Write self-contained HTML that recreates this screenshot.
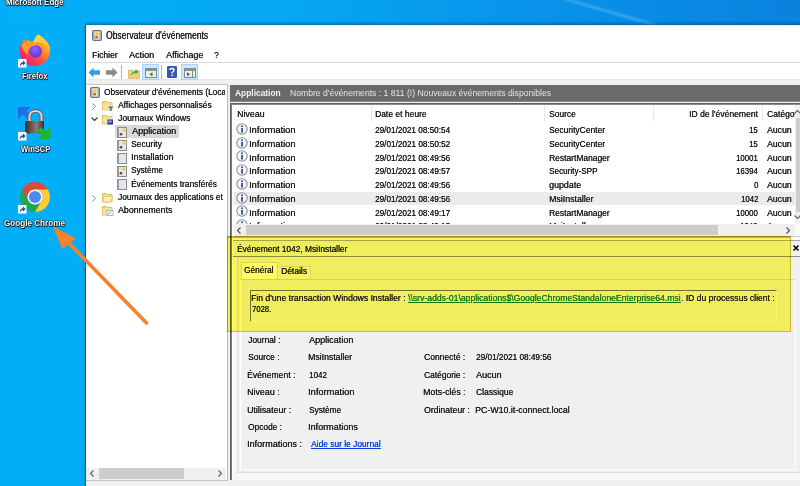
<!DOCTYPE html>
<html><head><meta charset="utf-8">
<style>
*{margin:0;padding:0;box-sizing:border-box}
html,body{width:800px;height:486px;overflow:hidden}
body{background:#03aef8;font-family:"Liberation Sans",sans-serif;font-size:9px;color:#1a1a1a;position:relative}
.a{position:absolute;white-space:nowrap}
svg.a{overflow:visible}
.dl{color:#fff}
</style></head><body>
<div class="a" style="left:0px;top:0px;width:800px;height:25px;background:linear-gradient(to right,#03aef8 0%,#05a8f4 35%,#0894ea 65%,#0a82de 100%);"></div>
<svg class="a" style="left:0;top:0" width="800" height="25"><defs><filter id="bl"><feGaussianBlur stdDeviation="1"/></filter></defs><path d="M565 -1 L655 25" stroke="rgba(140,205,255,0.4)" stroke-width="2.5" filter="url(#bl)"/></svg>
<div class="a" style="left:85px;top:20px;width:715px;height:5px;background:linear-gradient(rgba(0,40,80,0),rgba(0,40,80,0.12) 50%,rgba(0,40,80,0.4));"></div>
<div class="a" style="left:81px;top:25px;width:4px;height:461px;background:linear-gradient(to right,rgba(0,60,120,0),rgba(0,60,120,0.14));"></div>
<div class="a" style="left:85px;top:25px;width:715px;height:461px;background:#f0f0f0;"></div>
<div class="a" style="left:86px;top:26px;width:714px;height:54px;background:#fff;"></div>
<div class="a" style="left:85px;top:25px;width:1px;height:461px;background:#1d5480;"></div>
<div class="a" style="left:86px;top:62px;width:714px;height:1px;background:#dadada;"></div>
<div class="a" style="left:86px;top:79px;width:714px;height:1px;background:#e6e6e6;"></div>
<svg class="a" style="left:92px;top:30px" width="10" height="11" viewBox="0 0 10 11"><rect x="0.5" y="0.5" width="9" height="10" rx="1" fill="#a3aacb" stroke="#6b6f86" stroke-width="1"/><rect x="2.5" y="1.5" width="5" height="8" fill="#f4e6a8"/><circle cx="5" cy="3.8" r="1.4" fill="#e8c040"/><circle cx="4.6" cy="7.2" r="1.4" fill="#c8584a"/></svg>
<div class="a" style="left:105.62px;top:29.89px;font-size:10px;line-height:12.5px;transform:scaleX(0.8525);transform-origin:0 0;text-shadow:0.2px 0 0;">Observateur d'événements</div>
<div class="a" style="left:91.92px;top:48.77px;font-size:9.5px;line-height:11.88px;transform:scaleX(0.8971);transform-origin:0 0;text-shadow:0.2px 0 0;">Fichier</div>
<div class="a" style="left:129.40px;top:48.77px;font-size:9.5px;line-height:11.88px;transform:scaleX(0.9520);transform-origin:0 0;text-shadow:0.2px 0 0;">Action</div>
<div class="a" style="left:166.00px;top:48.77px;font-size:9.5px;line-height:11.88px;transform:scaleX(0.9476);transform-origin:0 0;text-shadow:0.2px 0 0;">Affichage</div>
<div class="a" style="left:213.67px;top:48.77px;font-size:9.5px;line-height:11.88px;transform:scaleX(0.8772);transform-origin:0 0;text-shadow:0.2px 0 0;">?</div>
<svg class="a" style="left:88px;top:66.5px" width="13" height="11" viewBox="0 0 13 11"><path d="M0.5 5.5 L5.5 0.5 V3.3 H12 V7.7 H5.5 V10.5 Z" fill="#3a9ce8"/></svg>
<svg class="a" style="left:104.5px;top:66.5px" width="13" height="11" viewBox="0 0 13 11"><path d="M12.5 5.5 L7.5 0.5 V3.3 H1 V7.7 H7.5 V10.5 Z" fill="#8a8a8a"/></svg>
<div class="a" style="left:121px;top:65px;width:1px;height:14px;background:#b4b4b4;"></div>
<svg class="a" style="left:127.5px;top:66.5px" width="12" height="12" viewBox="0 0 12 12"><path d="M0.5 3 H4.5 L5.5 4 H11.5 V11.5 H0.5 Z" fill="#f0cf7a" stroke="#c9a650" stroke-width="0.6"/><path d="M2.5 9 C3.5 6 5 4.5 7.5 4 V2 L10.5 4.8 L7.5 7.5 V5.8 C6 6 4 7 2.5 9Z" fill="#3fae3a"/></svg>
<div class="a" style="left:142px;top:63.8px;width:16.8px;height:16px;background:#cfe7fb;border:1px solid #a9d4f7;"></div>
<svg class="a" style="left:144.5px;top:67.5px" width="12" height="10" viewBox="0 0 12 10"><rect x="0.5" y="0.5" width="11" height="9" fill="#e8efe4" stroke="#808a90" stroke-width="1"/><rect x="0.5" y="0.5" width="11" height="2.5" fill="#8a9096"/><path d="M7.5 4.2 L4.5 6.2 L7.5 8.2 Z" fill="#3a6a3a"/></svg>
<div class="a" style="left:160.5px;top:65px;width:1px;height:14px;background:#b4b4b4;"></div>
<svg class="a" style="left:167px;top:66px" width="10" height="12" viewBox="0 0 10 12"><rect x="0" y="0" width="10" height="12" rx="1" fill="#3a57b8"/><path d="M3 4 C3 2 7 2 7 4 C7 5.5 5 5.5 5 7.5" fill="none" stroke="#fff" stroke-width="1.4"/><rect x="4.3" y="8.6" width="1.5" height="1.5" fill="#fff"/></svg>
<div class="a" style="left:181.3px;top:63.8px;width:16.5px;height:16px;background:#cfe7fb;border:1px solid #a9d4f7;"></div>
<svg class="a" style="left:183.5px;top:67.5px" width="12" height="10" viewBox="0 0 12 10"><rect x="0.5" y="0.5" width="11" height="9" fill="#e8efe4" stroke="#808a90" stroke-width="1"/><rect x="0.5" y="0.5" width="11" height="2.5" fill="#8a9096"/><rect x="8" y="3" width="1" height="6.5" fill="#808a90"/><path d="M3 4.2 L6 6.2 L3 8.2 Z" fill="#3a6a3a"/></svg>
<div class="a" style="left:86px;top:84px;width:141.5px;height:397px;background:#fff;border-top:1px solid #c4c4c4;border-right:1px solid #b9b9b9;border-bottom:1px solid #c4c4c4;"></div>
<div class="a" style="left:0;top:0;width:224.5px;height:486px;overflow:hidden">
<div class="a" style="left:114.5px;top:125.2px;width:64px;height:12.5px;background:#d9d9d9;"></div>
<svg class="a" style="left:89.5px;top:87.3px" width="10" height="11" viewBox="0 0 10 11"><rect x="0.5" y="0.5" width="9" height="10" rx="1" fill="#a3aacb" stroke="#6b6f86" stroke-width="1"/><rect x="2.5" y="1.5" width="5" height="8" fill="#f4e6a8"/><circle cx="5" cy="3.8" r="1.4" fill="#e8c040"/><circle cx="4.6" cy="7.2" r="1.4" fill="#c8584a"/></svg>
<div class="a" style="left:103.63px;top:86.17px;font-size:9.5px;line-height:11.88px;transform:scaleX(0.8700);transform-origin:0 0;text-shadow:0.2px 0 0;">Observateur d'événements (Local)</div>
<svg class="a" style="left:91px;top:103.4px" width="7" height="7" viewBox="0 0 7 7"><path d="M1.5 0.5l3 3-3 3" fill="none" stroke="#8a8a8a" stroke-width="1.0"/></svg>
<svg class="a" style="left:102px;top:100.4px" width="12" height="11" viewBox="0 0 12 11"><path d="M0.5 1.5h4l1 1h4.5v7.5h-9.5z" fill="#f2d779" stroke="#d9b64a" stroke-width="0.8"/><rect x="0.8" y="3.2" width="9" height="6.5" fill="#f7e49a"/><path d="M6 6.5h5.5l-2 2.2v2.3h-1.4v-2.3z" fill="#4f6f95"/></svg>
<div class="a" style="left:117.70px;top:99.22px;font-size:9.5px;line-height:11.88px;transform:scaleX(0.8876);transform-origin:0 0;text-shadow:0.2px 0 0;">Affichages personnalisés</div>
<svg class="a" style="left:90.5px;top:116.0px" width="7" height="7" viewBox="0 0 7 7"><path d="M0.5 1.5l3 3 3-3" fill="none" stroke="#333" stroke-width="1.1"/></svg>
<svg class="a" style="left:102px;top:113.5px" width="12" height="11" viewBox="0 0 12 11"><path d="M0.5 1.5h4l1 1h4.5v7.5h-9.5z" fill="#f2d779" stroke="#d9b64a" stroke-width="0.8"/><rect x="0.8" y="3.2" width="9" height="6.5" fill="#f7e49a"/><rect x="5.5" y="5.5" width="5.5" height="5" fill="#1f3fa6"/><rect x="6.5" y="6.5" width="3" height="2" fill="#9ab0e8"/></svg>
<div class="a" style="left:117.57px;top:112.27px;font-size:9.5px;line-height:11.88px;transform:scaleX(0.9010);transform-origin:0 0;text-shadow:0.2px 0 0;">Journaux Windows</div>
<svg class="a" style="left:117px;top:126.6px" width="10" height="11" viewBox="0 0 10 11"><rect x="0.5" y="0.5" width="9" height="10" fill="#dfe8f2" stroke="#8b8b8b" stroke-width="1"/><rect x="0.5" y="0.5" width="1.5" height="10" fill="#9c9c9c"/><circle cx="6.8" cy="3" r="1.7" fill="#f0d040"/><circle cx="4" cy="7.3" r="1.3" fill="#8a3020"/></svg>
<div class="a" style="left:131.50px;top:125.32px;font-size:9.5px;line-height:11.88px;transform:scaleX(0.9480);transform-origin:0 0;text-shadow:0.2px 0 0;">Application</div>
<svg class="a" style="left:117px;top:139.7px" width="10" height="11" viewBox="0 0 10 11"><rect x="0.5" y="0.5" width="9" height="10" fill="#dfe8f2" stroke="#8b8b8b" stroke-width="1"/><rect x="0.5" y="0.5" width="1.5" height="10" fill="#9c9c9c"/><circle cx="6.8" cy="3" r="1.7" fill="#f0d040"/><circle cx="4" cy="7.3" r="1.3" fill="#8a3020"/></svg>
<div class="a" style="left:131.12px;top:138.37px;font-size:9.5px;line-height:11.88px;transform:scaleX(0.8947);transform-origin:0 0;text-shadow:0.2px 0 0;">Security</div>
<svg class="a" style="left:117px;top:152.8px" width="10" height="11" viewBox="0 0 10 11"><rect x="0.5" y="0.5" width="9" height="10" fill="#dfe8f2" stroke="#8b8b8b" stroke-width="1"/><rect x="0.5" y="0.5" width="1.5" height="10" fill="#9c9c9c"/></svg>
<div class="a" style="left:130.70px;top:151.42px;font-size:9.5px;line-height:11.88px;transform:scaleX(0.9344);transform-origin:0 0;text-shadow:0.2px 0 0;">Installation</div>
<svg class="a" style="left:117px;top:165.9px" width="10" height="11" viewBox="0 0 10 11"><rect x="0.5" y="0.5" width="9" height="10" fill="#dfe8f2" stroke="#8b8b8b" stroke-width="1"/><rect x="0.5" y="0.5" width="1.5" height="10" fill="#9c9c9c"/><circle cx="6.8" cy="3" r="1.7" fill="#f0d040"/><circle cx="4" cy="7.3" r="1.3" fill="#8a3020"/></svg>
<div class="a" style="left:131.13px;top:164.47px;font-size:9.5px;line-height:11.88px;transform:scaleX(0.8631);transform-origin:0 0;text-shadow:0.2px 0 0;">Système</div>
<svg class="a" style="left:117px;top:179.0px" width="10" height="11" viewBox="0 0 10 11"><rect x="0.5" y="0.5" width="9" height="10" fill="#dfe8f2" stroke="#8b8b8b" stroke-width="1"/><rect x="0.5" y="0.5" width="1.5" height="10" fill="#9c9c9c"/></svg>
<div class="a" style="left:130.83px;top:177.52px;font-size:9.5px;line-height:11.88px;transform:scaleX(0.8787);transform-origin:0 0;text-shadow:0.2px 0 0;">Événements transférés</div>
<svg class="a" style="left:91px;top:195.1px" width="7" height="7" viewBox="0 0 7 7"><path d="M1.5 0.5l3 3-3 3" fill="none" stroke="#8a8a8a" stroke-width="1.0"/></svg>
<svg class="a" style="left:102px;top:192.1px" width="12" height="11" viewBox="0 0 12 11"><path d="M0.5 1.5h4l1 1h4.5v7.5h-9.5z" fill="#f2d779" stroke="#d9b64a" stroke-width="0.8"/><rect x="0.8" y="3.2" width="9" height="6.5" fill="#f7e49a"/><path d="M1.5 4.5h9l-1.5 5.5h-8z" fill="#fbeeb8" stroke="#d9b64a" stroke-width="0.6"/></svg>
<div class="a" style="left:117.58px;top:190.57px;font-size:9.5px;line-height:11.88px;transform:scaleX(0.8700);transform-origin:0 0;text-shadow:0.2px 0 0;">Journaux des applications et services</div>
<svg class="a" style="left:102px;top:205.2px" width="12" height="11" viewBox="0 0 12 11"><path d="M0.5 1.5h4l1 1h4.5v7.5h-9.5z" fill="#f2d779" stroke="#d9b64a" stroke-width="0.8"/><rect x="0.8" y="3.2" width="9" height="6.5" fill="#f7e49a"/><rect x="5" y="5.5" width="6" height="5" fill="#fff" stroke="#8aa0c8" stroke-width="0.7"/><path d="M6 9.5l3-3" stroke="#4070c0" stroke-width="0.8"/></svg>
<div class="a" style="left:117.70px;top:203.62px;font-size:9.5px;line-height:11.88px;transform:scaleX(0.9265);transform-origin:0 0;text-shadow:0.2px 0 0;">Abonnements</div>
</div>
<div class="a" style="left:86px;top:467.5px;width:140px;height:12.5px;background:#f0f0f0;"></div>
<div class="a" style="left:98.5px;top:468px;width:85px;height:10.5px;background:#cdcdcd;"></div>
<svg class="a" style="left:88.5px;top:470px" width="7" height="7" viewBox="0 0 7 7"><path d="M4.5 0.5l-3 3 3 3" fill="none" stroke="#606060" stroke-width="1.1"/></svg>
<svg class="a" style="left:217px;top:470px" width="7" height="7" viewBox="0 0 7 7"><path d="M1.5 0.5l3 3-3 3" fill="none" stroke="#606060" stroke-width="1.1"/></svg>
<div class="a" style="left:229.5px;top:85px;width:571px;height:15.5px;background:#6a6a6a;"></div>
<div class="a" style="left:234.79px;top:87.37px;font-size:9.5px;line-height:11.88px;transform:scaleX(0.8837);transform-origin:0 0;color:#f4f4f4;font-weight:bold;">Application</div>
<div class="a" style="left:290.31px;top:87.37px;font-size:9.5px;line-height:11.88px;transform:scaleX(0.9067);transform-origin:0 0;color:#e4e4e4;">Nombre d'événements : 1 811 (!) Nouveaux événements disponibles</div>
<div class="a" style="left:229.5px;top:101px;width:571px;height:1px;background:#8a8a8a;"></div>
<div class="a" style="left:229.6px;top:102.8px;width:571px;height:377.2px;background:#fff;border-left:1.6px solid #5e5e5e;border-top:1.4px solid #5e5e5e;"></div>
<div class="a" style="left:231.2px;top:104.2px;width:569px;height:375.8px;background:#fff;border-left:1.5px solid #7c7c7c;border-top:1.3px solid #8a8a8a;"></div>
<div class="a" style="left:233.5px;top:104.5px;width:561.5px;height:119.5px;overflow:hidden">
<div class="a" style="left:-233.5px;top:-104.5px;width:800px;height:486px">
<div class="a" style="left:370.5px;top:105px;width:1px;height:16px;background:#e6e6e6;"></div>
<div class="a" style="left:544px;top:105px;width:1px;height:16px;background:#e6e6e6;"></div>
<div class="a" style="left:653px;top:105px;width:1px;height:16px;background:#e6e6e6;"></div>
<div class="a" style="left:761.5px;top:105px;width:1px;height:16px;background:#e6e6e6;"></div>
<div class="a" style="left:237.29px;top:108.17px;font-size:9.5px;line-height:11.88px;transform:scaleX(0.9319);transform-origin:0 0;text-shadow:0.2px 0 0;">Niveau</div>
<div class="a" style="left:375.07px;top:108.17px;font-size:9.5px;line-height:11.88px;transform:scaleX(0.8949);transform-origin:0 0;text-shadow:0.2px 0 0;">Date et heure</div>
<div class="a" style="left:549.12px;top:108.17px;font-size:9.5px;line-height:11.88px;transform:scaleX(0.8886);transform-origin:0 0;text-shadow:0.2px 0 0;">Source</div>
<div class="a" style="left:688.73px;top:108.17px;font-size:9.5px;line-height:11.88px;transform:scaleX(0.9034);transform-origin:0 0;text-shadow:0.2px 0 0;">ID de l'événement</div>
<div class="a" style="left:766.67px;top:108.17px;font-size:9.5px;line-height:11.88px;transform:scaleX(0.9000);transform-origin:0 0;text-shadow:0.2px 0 0;">Catégorie</div>
<div class="a" style="left:233.5px;top:191.5px;width:561px;height:13.2px;background:#ebebeb;"></div>
<svg class="a" style="left:235.5px;top:122.85000000000001px" width="12" height="12" viewBox="0 0 12 12"><circle cx="6" cy="6" r="5.2" fill="#f4f7fc" stroke="#8d8d8d" stroke-width="1.1"/><circle cx="6" cy="3.3" r="1" fill="#2f4f9f"/><rect x="5.1" y="5" width="1.8" height="4.6" fill="#2f4f9f"/></svg>
<div class="a" style="left:248.66px;top:124.02px;font-size:9.5px;line-height:11.88px;transform:scaleX(0.9767);transform-origin:0 0;text-shadow:0.2px 0 0;">Information</div>
<div class="a" style="left:375.19px;top:124.02px;font-size:9.5px;line-height:11.88px;transform:scaleX(0.8606);transform-origin:0 0;text-shadow:0.2px 0 0;">29/01/2021 08:50:54</div>
<div class="a" style="left:549.12px;top:124.02px;font-size:9.5px;line-height:11.88px;transform:scaleX(0.8912);transform-origin:0 0;text-shadow:0.2px 0 0;">SecurityCenter</div>
<div class="a" style="left:749.23px;top:124.02px;font-size:9.5px;line-height:11.88px;transform:scaleX(0.8231);transform-origin:0 0;text-shadow:0.2px 0 0;">15</div>
<div class="a" style="left:767.10px;top:124.02px;font-size:9.5px;line-height:11.88px;transform:scaleX(0.9142);transform-origin:0 0;text-shadow:0.2px 0 0;">Aucun</div>
<svg class="a" style="left:235.5px;top:136.62px" width="12" height="12" viewBox="0 0 12 12"><circle cx="6" cy="6" r="5.2" fill="#f4f7fc" stroke="#8d8d8d" stroke-width="1.1"/><circle cx="6" cy="3.3" r="1" fill="#2f4f9f"/><rect x="5.1" y="5" width="1.8" height="4.6" fill="#2f4f9f"/></svg>
<div class="a" style="left:248.66px;top:137.79px;font-size:9.5px;line-height:11.88px;transform:scaleX(0.9767);transform-origin:0 0;text-shadow:0.2px 0 0;">Information</div>
<div class="a" style="left:375.19px;top:137.79px;font-size:9.5px;line-height:11.88px;transform:scaleX(0.8625);transform-origin:0 0;text-shadow:0.2px 0 0;">29/01/2021 08:50:52</div>
<div class="a" style="left:549.12px;top:137.79px;font-size:9.5px;line-height:11.88px;transform:scaleX(0.8912);transform-origin:0 0;text-shadow:0.2px 0 0;">SecurityCenter</div>
<div class="a" style="left:749.23px;top:137.79px;font-size:9.5px;line-height:11.88px;transform:scaleX(0.8231);transform-origin:0 0;text-shadow:0.2px 0 0;">15</div>
<div class="a" style="left:767.10px;top:137.79px;font-size:9.5px;line-height:11.88px;transform:scaleX(0.9142);transform-origin:0 0;text-shadow:0.2px 0 0;">Aucun</div>
<svg class="a" style="left:235.5px;top:150.39px" width="12" height="12" viewBox="0 0 12 12"><circle cx="6" cy="6" r="5.2" fill="#f4f7fc" stroke="#8d8d8d" stroke-width="1.1"/><circle cx="6" cy="3.3" r="1" fill="#2f4f9f"/><rect x="5.1" y="5" width="1.8" height="4.6" fill="#2f4f9f"/></svg>
<div class="a" style="left:248.66px;top:151.56px;font-size:9.5px;line-height:11.88px;transform:scaleX(0.9767);transform-origin:0 0;text-shadow:0.2px 0 0;">Information</div>
<div class="a" style="left:375.19px;top:151.56px;font-size:9.5px;line-height:11.88px;transform:scaleX(0.8620);transform-origin:0 0;text-shadow:0.2px 0 0;">29/01/2021 08:49:56</div>
<div class="a" style="left:548.82px;top:151.56px;font-size:9.5px;line-height:11.88px;transform:scaleX(0.8897);transform-origin:0 0;text-shadow:0.2px 0 0;">RestartManager</div>
<div class="a" style="left:736.21px;top:151.56px;font-size:9.5px;line-height:11.88px;transform:scaleX(0.8231);transform-origin:0 0;text-shadow:0.2px 0 0;">10001</div>
<div class="a" style="left:767.10px;top:151.56px;font-size:9.5px;line-height:11.88px;transform:scaleX(0.9142);transform-origin:0 0;text-shadow:0.2px 0 0;">Aucun</div>
<svg class="a" style="left:235.5px;top:164.16px" width="12" height="12" viewBox="0 0 12 12"><circle cx="6" cy="6" r="5.2" fill="#f4f7fc" stroke="#8d8d8d" stroke-width="1.1"/><circle cx="6" cy="3.3" r="1" fill="#2f4f9f"/><rect x="5.1" y="5" width="1.8" height="4.6" fill="#2f4f9f"/></svg>
<div class="a" style="left:248.66px;top:165.33px;font-size:9.5px;line-height:11.88px;transform:scaleX(0.9767);transform-origin:0 0;text-shadow:0.2px 0 0;">Information</div>
<div class="a" style="left:375.19px;top:165.33px;font-size:9.5px;line-height:11.88px;transform:scaleX(0.8625);transform-origin:0 0;text-shadow:0.2px 0 0;">29/01/2021 08:49:57</div>
<div class="a" style="left:549.13px;top:165.33px;font-size:9.5px;line-height:11.88px;transform:scaleX(0.8583);transform-origin:0 0;text-shadow:0.2px 0 0;">Security-SPP</div>
<div class="a" style="left:736.06px;top:165.33px;font-size:9.5px;line-height:11.88px;transform:scaleX(0.8231);transform-origin:0 0;text-shadow:0.2px 0 0;">16394</div>
<div class="a" style="left:767.10px;top:165.33px;font-size:9.5px;line-height:11.88px;transform:scaleX(0.9142);transform-origin:0 0;text-shadow:0.2px 0 0;">Aucun</div>
<svg class="a" style="left:235.5px;top:177.93px" width="12" height="12" viewBox="0 0 12 12"><circle cx="6" cy="6" r="5.2" fill="#f4f7fc" stroke="#8d8d8d" stroke-width="1.1"/><circle cx="6" cy="3.3" r="1" fill="#2f4f9f"/><rect x="5.1" y="5" width="1.8" height="4.6" fill="#2f4f9f"/></svg>
<div class="a" style="left:248.66px;top:179.10px;font-size:9.5px;line-height:11.88px;transform:scaleX(0.9767);transform-origin:0 0;text-shadow:0.2px 0 0;">Information</div>
<div class="a" style="left:375.19px;top:179.10px;font-size:9.5px;line-height:11.88px;transform:scaleX(0.8620);transform-origin:0 0;text-shadow:0.2px 0 0;">29/01/2021 08:49:56</div>
<div class="a" style="left:549.14px;top:179.10px;font-size:9.5px;line-height:11.88px;transform:scaleX(0.9350);transform-origin:0 0;text-shadow:0.2px 0 0;">gupdate</div>
<div class="a" style="left:753.53px;top:179.10px;font-size:9.5px;line-height:11.88px;transform:scaleX(0.8231);transform-origin:0 0;text-shadow:0.2px 0 0;">0</div>
<div class="a" style="left:767.10px;top:179.10px;font-size:9.5px;line-height:11.88px;transform:scaleX(0.9142);transform-origin:0 0;text-shadow:0.2px 0 0;">Aucun</div>
<svg class="a" style="left:235.5px;top:191.7px" width="12" height="12" viewBox="0 0 12 12"><circle cx="6" cy="6" r="5.2" fill="#f4f7fc" stroke="#8d8d8d" stroke-width="1.1"/><circle cx="6" cy="3.3" r="1" fill="#2f4f9f"/><rect x="5.1" y="5" width="1.8" height="4.6" fill="#2f4f9f"/></svg>
<div class="a" style="left:248.66px;top:192.87px;font-size:9.5px;line-height:11.88px;transform:scaleX(0.9767);transform-origin:0 0;text-shadow:0.2px 0 0;">Information</div>
<div class="a" style="left:375.19px;top:192.87px;font-size:9.5px;line-height:11.88px;transform:scaleX(0.8620);transform-origin:0 0;text-shadow:0.2px 0 0;">29/01/2021 08:49:56</div>
<div class="a" style="left:548.80px;top:192.87px;font-size:9.5px;line-height:11.88px;transform:scaleX(0.9265);transform-origin:0 0;text-shadow:0.2px 0 0;">MsiInstaller</div>
<div class="a" style="left:740.55px;top:192.87px;font-size:9.5px;line-height:11.88px;transform:scaleX(0.8231);transform-origin:0 0;text-shadow:0.2px 0 0;">1042</div>
<div class="a" style="left:767.10px;top:192.87px;font-size:9.5px;line-height:11.88px;transform:scaleX(0.9142);transform-origin:0 0;text-shadow:0.2px 0 0;">Aucun</div>
<svg class="a" style="left:235.5px;top:205.47px" width="12" height="12" viewBox="0 0 12 12"><circle cx="6" cy="6" r="5.2" fill="#f4f7fc" stroke="#8d8d8d" stroke-width="1.1"/><circle cx="6" cy="3.3" r="1" fill="#2f4f9f"/><rect x="5.1" y="5" width="1.8" height="4.6" fill="#2f4f9f"/></svg>
<div class="a" style="left:248.66px;top:206.64px;font-size:9.5px;line-height:11.88px;transform:scaleX(0.9767);transform-origin:0 0;text-shadow:0.2px 0 0;">Information</div>
<div class="a" style="left:375.19px;top:206.64px;font-size:9.5px;line-height:11.88px;transform:scaleX(0.8625);transform-origin:0 0;text-shadow:0.2px 0 0;">29/01/2021 08:49:17</div>
<div class="a" style="left:548.82px;top:206.64px;font-size:9.5px;line-height:11.88px;transform:scaleX(0.8897);transform-origin:0 0;text-shadow:0.2px 0 0;">RestartManager</div>
<div class="a" style="left:736.14px;top:206.64px;font-size:9.5px;line-height:11.88px;transform:scaleX(0.8231);transform-origin:0 0;text-shadow:0.2px 0 0;">10000</div>
<div class="a" style="left:767.10px;top:206.64px;font-size:9.5px;line-height:11.88px;transform:scaleX(0.9142);transform-origin:0 0;text-shadow:0.2px 0 0;">Aucun</div>
<svg class="a" style="left:235.5px;top:219.24px" width="12" height="12" viewBox="0 0 12 12"><circle cx="6" cy="6" r="5.2" fill="#f4f7fc" stroke="#8d8d8d" stroke-width="1.1"/><circle cx="6" cy="3.3" r="1" fill="#2f4f9f"/><rect x="5.1" y="5" width="1.8" height="4.6" fill="#2f4f9f"/></svg>
<div class="a" style="left:248.66px;top:220.41px;font-size:9.5px;line-height:11.88px;transform:scaleX(0.9767);transform-origin:0 0;text-shadow:0.2px 0 0;">Information</div>
<div class="a" style="left:375.19px;top:220.41px;font-size:9.5px;line-height:11.88px;transform:scaleX(0.8620);transform-origin:0 0;text-shadow:0.2px 0 0;">29/01/2021 08:49:13</div>
<div class="a" style="left:548.80px;top:220.41px;font-size:9.5px;line-height:11.88px;transform:scaleX(0.9265);transform-origin:0 0;text-shadow:0.2px 0 0;">MsiInstaller</div>
<div class="a" style="left:740.48px;top:220.41px;font-size:9.5px;line-height:11.88px;transform:scaleX(0.8231);transform-origin:0 0;text-shadow:0.2px 0 0;">1040</div>
<div class="a" style="left:767.10px;top:220.41px;font-size:9.5px;line-height:11.88px;transform:scaleX(0.9142);transform-origin:0 0;text-shadow:0.2px 0 0;">Aucun</div>
</div></div>
<div class="a" style="left:794.5px;top:104.5px;width:5.5px;height:119.5px;background:#f0f0f0;"></div>
<div class="a" style="left:795.5px;top:118px;width:4.5px;height:94px;background:#cdcdcd;"></div>
<svg class="a" style="left:793.5px;top:109px" width="7" height="7" viewBox="0 0 7 7"><path d="M0.5 4.5l3-3 3 3" fill="none" stroke="#606060" stroke-width="1.1"/></svg>
<svg class="a" style="left:793.5px;top:214px" width="7" height="7" viewBox="0 0 7 7"><path d="M0.5 1.5l3 3 3-3" fill="none" stroke="#606060" stroke-width="1.1"/></svg>
<div class="a" style="left:233.5px;top:224px;width:561px;height:11.5px;background:#f0f0f0;"></div>
<div class="a" style="left:245.5px;top:224.5px;width:472px;height:10.5px;background:#cdcdcd;"></div>
<div class="a" style="left:794.5px;top:224px;width:5.5px;height:11.5px;background:#fafafa;"></div>
<svg class="a" style="left:236px;top:226.5px" width="7" height="7" viewBox="0 0 7 7"><path d="M4.5 0.5l-3 3 3 3" fill="none" stroke="#505050" stroke-width="1.1"/></svg>
<svg class="a" style="left:785px;top:226.5px" width="7" height="7" viewBox="0 0 7 7"><path d="M1.5 0.5l3 3-3 3" fill="none" stroke="#505050" stroke-width="1.1"/></svg>
<div class="a" style="left:233.5px;top:235.5px;width:567px;height:1px;background:#c8c8c8;"></div>
<div class="a" style="left:232.7px;top:236.5px;width:567.3px;height:243.5px;background:#f7f7f7;"></div>
<div class="a" style="left:237px;top:257px;width:563px;height:216px;background:#f0f0f0;border-left:1px solid #dedede;border-bottom:1px solid #dedede;"></div>
<div class="a" style="left:233.5px;top:236.5px;width:566.5px;height:3.5px;background:#fafafa;"></div>
<div class="a" style="left:232.7px;top:240px;width:567.3px;height:16.5px;background:#f0f0f0;border-top:1px solid #a8a8a8;border-bottom:1px solid #8c8c8c;"></div>
<div class="a" style="left:236.83px;top:242.87px;font-size:9.5px;line-height:11.88px;transform:scaleX(0.8812);transform-origin:0 0;text-shadow:0.2px 0 0;">Événement 1042, MsiInstaller</div>
<svg class="a" style="left:792.5px;top:245px" width="6" height="6" viewBox="0 0 6 6"><path d="M0.5 0.5l5 5M5.5 0.5l-5 5" stroke="#000" stroke-width="1.5"/></svg>
<div class="a" style="left:239.5px;top:278.5px;width:556px;height:191.5px;background:#f0f0f0;border:1px solid #fff;border-top:1px solid #d4d4d4;"></div>
<div class="a" style="left:240.5px;top:262.2px;width:37.5px;height:17px;background:#fff;border:1px solid #d8d8d8;border-bottom:none;"></div>
<div class="a" style="left:278px;top:266px;width:32.5px;height:12.5px;background:#f4f4f4;border:1px solid #d8d8d8;border-bottom:none;border-left:none;"></div>
<div class="a" style="left:244.09px;top:263.67px;font-size:9.5px;line-height:11.88px;transform:scaleX(0.8708);transform-origin:0 0;text-shadow:0.2px 0 0;">Général</div>
<div class="a" style="left:281.32px;top:265.37px;font-size:9.5px;line-height:11.88px;transform:scaleX(0.8951);transform-origin:0 0;text-shadow:0.2px 0 0;">Détails</div>
<div class="a" style="left:249.5px;top:290px;width:527px;height:32px;background:#f0f0f0;border:1px solid #fafafa;border-top:1.5px solid #707070;border-left:1.5px solid #707070;"></div>
<div class="a" style="left:251.31px;top:291.87px;font-size:9.5px;line-height:11.88px;transform:scaleX(0.9071);transform-origin:0 0;text-shadow:0.2px 0 0;">Fin d'une transaction Windows Installer :</div>
<div class="a" style="left:408.00px;top:291.87px;font-size:9.5px;line-height:11.88px;transform:scaleX(0.9088);transform-origin:0 0;color:#0f7a20;text-shadow:0.2px 0 0;text-decoration:underline;">\\srv-adds-01\applications$\GoogleChromeStandaloneEnterprise64.msi</div>
<div class="a" style="left:681.23px;top:291.87px;font-size:9.5px;line-height:11.88px;transform:scaleX(0.8992);transform-origin:0 0;text-shadow:0.2px 0 0;">. ID du processus client :</div>
<div class="a" style="left:251.62px;top:302.87px;font-size:9.5px;line-height:11.88px;transform:scaleX(0.8012);transform-origin:0 0;text-shadow:0.2px 0 0;">7028.</div>
<div class="a" style="left:240.5px;top:331px;width:554px;height:138px;background:#f0f0f0;"></div>
<div class="a" style="left:247.77px;top:334.17px;font-size:9.5px;line-height:11.88px;transform:scaleX(0.8906);transform-origin:0 0;text-shadow:0.2px 0 0;">Journal :</div>
<div class="a" style="left:247.52px;top:351.47px;font-size:9.5px;line-height:11.88px;transform:scaleX(0.8914);transform-origin:0 0;text-shadow:0.2px 0 0;">Source :</div>
<div class="a" style="left:247.21px;top:368.77px;font-size:9.5px;line-height:11.88px;transform:scaleX(0.9067);transform-origin:0 0;text-shadow:0.2px 0 0;">Événement :</div>
<div class="a" style="left:247.19px;top:386.07px;font-size:9.5px;line-height:11.88px;transform:scaleX(0.9353);transform-origin:0 0;text-shadow:0.2px 0 0;">Niveau :</div>
<div class="a" style="left:247.24px;top:403.57px;font-size:9.5px;line-height:11.88px;transform:scaleX(0.9287);transform-origin:0 0;text-shadow:0.2px 0 0;">Utilisateur :</div>
<div class="a" style="left:247.52px;top:420.87px;font-size:9.5px;line-height:11.88px;transform:scaleX(0.8797);transform-origin:0 0;text-shadow:0.2px 0 0;">Opcode :</div>
<div class="a" style="left:247.08px;top:438.17px;font-size:9.5px;line-height:11.88px;transform:scaleX(0.9542);transform-origin:0 0;text-shadow:0.2px 0 0;">Informations :</div>
<div class="a" style="left:309.10px;top:334.17px;font-size:9.5px;line-height:11.88px;transform:scaleX(0.9524);transform-origin:0 0;text-shadow:0.2px 0 0;">Application</div>
<div class="a" style="left:308.40px;top:351.47px;font-size:9.5px;line-height:11.88px;transform:scaleX(0.9159);transform-origin:0 0;text-shadow:0.2px 0 0;">MsiInstaller</div>
<div class="a" style="left:308.50px;top:368.77px;font-size:9.5px;line-height:11.88px;transform:scaleX(0.8451);transform-origin:0 0;text-shadow:0.2px 0 0;">1042</div>
<div class="a" style="left:308.27px;top:386.07px;font-size:9.5px;line-height:11.88px;transform:scaleX(0.9745);transform-origin:0 0;text-shadow:0.2px 0 0;">Information</div>
<div class="a" style="left:308.73px;top:403.57px;font-size:9.5px;line-height:11.88px;transform:scaleX(0.8687);transform-origin:0 0;text-shadow:0.2px 0 0;">Système</div>
<div class="a" style="left:308.29px;top:420.87px;font-size:9.5px;line-height:11.88px;transform:scaleX(0.9528);transform-origin:0 0;text-shadow:0.2px 0 0;">Informations</div>
<div class="a" style="left:311.10px;top:438.17px;font-size:9.5px;line-height:11.88px;transform:scaleX(0.8849);transform-origin:0 0;color:#0b3fd8;text-shadow:0.2px 0 0;text-decoration:underline;">Aide sur le Journal</div>
<div class="a" style="left:423.57px;top:351.47px;font-size:9.5px;line-height:11.88px;transform:scaleX(0.8959);transform-origin:0 0;text-shadow:0.2px 0 0;">Connecté :</div>
<div class="a" style="left:475.59px;top:351.47px;font-size:9.5px;line-height:11.88px;transform:scaleX(0.8644);transform-origin:0 0;text-shadow:0.2px 0 0;">29/01/2021 08:49:56</div>
<div class="a" style="left:423.58px;top:368.77px;font-size:9.5px;line-height:11.88px;transform:scaleX(0.8855);transform-origin:0 0;text-shadow:0.2px 0 0;">Catégorie :</div>
<div class="a" style="left:476.00px;top:368.77px;font-size:9.5px;line-height:11.88px;transform:scaleX(0.9483);transform-origin:0 0;text-shadow:0.2px 0 0;">Aucun</div>
<div class="a" style="left:423.30px;top:386.07px;font-size:9.5px;line-height:11.88px;transform:scaleX(0.9251);transform-origin:0 0;text-shadow:0.2px 0 0;">Mots-clés :</div>
<div class="a" style="left:475.58px;top:386.07px;font-size:9.5px;line-height:11.88px;transform:scaleX(0.8911);transform-origin:0 0;text-shadow:0.2px 0 0;">Classique</div>
<div class="a" style="left:423.61px;top:403.57px;font-size:9.5px;line-height:11.88px;transform:scaleX(0.9116);transform-origin:0 0;text-shadow:0.2px 0 0;">Ordinateur :</div>
<div class="a" style="left:475.29px;top:403.57px;font-size:9.5px;line-height:11.88px;transform:scaleX(0.9288);transform-origin:0 0;text-shadow:0.2px 0 0;">PC-W10.it-connect.local</div>
<div class="a" style="left:227px;top:236px;width:563.5px;height:95.5px;background:#fffd64;mix-blend-mode:multiply;border:1px solid #e0c236;border-top:2px solid #c8b030;"></div>
<div class="a" style="left:6.08px;top:-2.55px;font-size:8.8px;line-height:11.0px;transform:scaleX(0.9059);transform-origin:0 0;color:#fff;font-weight:bold;text-shadow:0 0 1px #000,0 0 1px #000,0 0 1.5px #000,0.5px 0.8px 1px #000;">Microsoft Edge</div>
<div class="a" style="left:21.50px;top:70.65px;font-size:8.8px;line-height:11.0px;transform:scaleX(0.8701);transform-origin:0 0;color:#fff;font-weight:bold;text-shadow:0 0 1px #000,0 0 1px #000,0 0 1.5px #000,0.5px 0.8px 1px #000;">Firefox</div>
<div class="a" style="left:20.50px;top:143.85px;font-size:8.8px;line-height:11.0px;transform:scaleX(0.8560);transform-origin:0 0;color:#fff;font-weight:bold;text-shadow:0 0 1px #000,0 0 1px #000,0 0 1.5px #000,0.5px 0.8px 1px #000;">WinSCP</div>
<div class="a" style="left:4.47px;top:217.65px;font-size:8.8px;line-height:11.0px;transform:scaleX(0.9238);transform-origin:0 0;color:#fff;font-weight:bold;text-shadow:0 0 1px #000,0 0 1px #000,0 0 1.5px #000,0.5px 0.8px 1px #000;">Google Chrome</div>
<svg class="a" style="left:17px;top:32px" width="36" height="36" viewBox="17 32 36 36"><defs><linearGradient id="ffg" x1="1" y1="0" x2="0.1" y2="1"><stop offset="0" stop-color="#fff04a"/><stop offset="0.3" stop-color="#ffa52a"/><stop offset="0.6" stop-color="#ff4f3a"/><stop offset="0.85" stop-color="#f0236e"/><stop offset="1" stop-color="#d6208c"/></linearGradient><radialGradient id="ffp" cx="0.45" cy="0.35" r="0.7"><stop offset="0" stop-color="#9a62ff"/><stop offset="1" stop-color="#5d2fd0"/></radialGradient><linearGradient id="ffs" x1="0" y1="0" x2="1" y2="1"><stop offset="0" stop-color="#ffe24a"/><stop offset="1" stop-color="#ffb02e"/></linearGradient></defs><circle cx="34.7" cy="50.7" r="15.2" fill="url(#ffg)"/><path d="M18 33 L37 33 L34 42 L29 41.3 L24 40.5 L19 41 Z" fill="#03aef8"/><path d="M22.5 41.5 L24 38.8 L25.6 41.2 Z M26.3 41.2 L28 39 L29.3 41.4 Z" fill="#ff8a30"/><path d="M32.5 43 C34 40 36 37 38.2 34.2 C44 38 50.5 43.5 50 51 C48 46 44 43 38 42 Z" fill="url(#ffs)"/><circle cx="35.6" cy="51.2" r="6.3" fill="url(#ffp)"/><path d="M21.5 45 C23 41 29 40 33.5 42.5 C37.5 42.5 41 43.5 43 46.5 C39.5 45 35 44.8 31.5 46.5 C28.5 48 27.5 51.5 28.3 55 C24.5 52.5 22 49 21.5 45 Z" fill="#ff9a2e"/></svg>
<svg class="a" style="left:17.9px;top:59px" width="8.5" height="8.5" viewBox="0 0 9 9"><rect x="0" y="0" width="9" height="9" fill="#fbfbfb"/><path d="M1.8 8 C1.8 5.2 3.3 3.6 5.3 3.5 V1.6 L8 4.3 L5.3 7 V5.3 C4 5.3 2.8 6.2 1.8 8Z" fill="#1d4f9a"/></svg>
<svg class="a" style="left:17px;top:102px" width="36" height="40" viewBox="0 0 36 40"><defs><linearGradient id="lk" x1="0" y1="0" x2="1" y2="0"><stop offset="0" stop-color="#2e2626"/><stop offset="0.35" stop-color="#6a5a56"/><stop offset="0.6" stop-color="#8a7c76"/><stop offset="1" stop-color="#3a3030"/></linearGradient></defs><path d="M1 5 L13.5 5 L9.5 9 L14 13.5 L10.5 17 L6 12.5 L1 17.5 Z" fill="#1f6fe8"/><path d="M12.5 20 V14.5 C12.5 7 24.5 7 24.5 14.5 V20" fill="none" stroke="#5a5a5a" stroke-width="3.6"/><path d="M12.5 20 V14.5 C12.5 7 24.5 7 24.5 14.5 V20" fill="none" stroke="#d8d8d8" stroke-width="2"/><rect x="8" y="19" width="19" height="12.5" rx="1" fill="url(#lk)"/><path d="M33.5 37 L21 37 L25 33 L20.5 28.5 L24 25 L28.5 29.5 L33.5 24.5 Z" fill="#1fb52a"/></svg>
<svg class="a" style="left:17.9px;top:132px" width="8.5" height="8.5" viewBox="0 0 9 9"><rect x="0" y="0" width="9" height="9" fill="#fbfbfb"/><path d="M1.8 8 C1.8 5.2 3.3 3.6 5.3 3.5 V1.6 L8 4.3 L5.3 7 V5.3 C4 5.3 2.8 6.2 1.8 8Z" fill="#1d4f9a"/></svg>
<svg class="a" style="left:17.75px;top:179.75px" width="34" height="34" viewBox="0 0 34 34"><path d="M29.99 9.5 A15 15 0 0 0 4.01 9.5 L10.505 20.75 A7.5 7.5 0 0 1 17 9.5 Z" fill="#de4a3a"/><path d="M4.01 9.5 A15 15 0 0 0 17 32 L23.495 20.75 A7.5 7.5 0 0 1 10.505 20.75 Z" fill="#23a455"/><path d="M17 32 A15 15 0 0 0 29.99 9.5 L17 9.5 A7.5 7.5 0 0 1 23.495 20.75 Z" fill="#fccb35"/><circle cx="17" cy="17" r="7.6" fill="#fff"/><circle cx="17" cy="17" r="6.1" fill="#5088ee"/></svg>
<svg class="a" style="left:17.9px;top:204.5px" width="8.5" height="8.5" viewBox="0 0 9 9"><rect x="0" y="0" width="9" height="9" fill="#fbfbfb"/><path d="M1.8 8 C1.8 5.2 3.3 3.6 5.3 3.5 V1.6 L8 4.3 L5.3 7 V5.3 C4 5.3 2.8 6.2 1.8 8Z" fill="#1d4f9a"/></svg>
<svg class="a" style="left:0;top:0" width="800" height="486" viewBox="0 0 800 486"><line x1="146.5" y1="323" x2="66" y2="240" stroke="#f5822e" stroke-width="3.6" stroke-linecap="round"/><path d="M53.6 227.3 L75 238.5 L62.7 248.6 Z" fill="#f5822e" stroke="#f5822e" stroke-width="1" stroke-linejoin="round"/></svg>
</body></html>
